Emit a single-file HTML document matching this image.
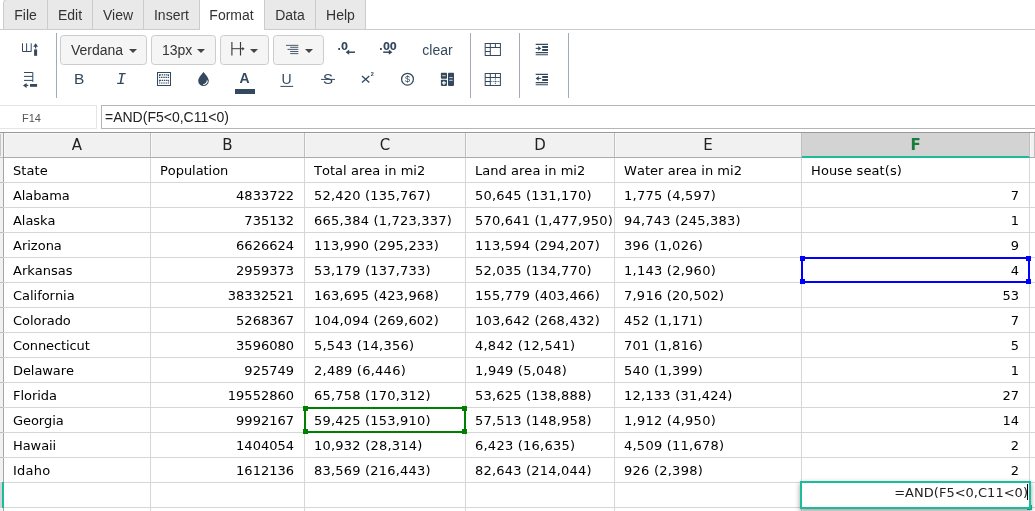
<!DOCTYPE html><html><head><meta charset="utf-8"><title>Spreadsheet</title><style>
*{box-sizing:border-box;margin:0;padding:0}
html,body{width:1035px;height:511px;overflow:hidden;background:#fff}
body{will-change:transform;position:relative;font-family:"Liberation Sans",Arial,sans-serif;color:#333}
#tabs{position:absolute;left:0;top:0;width:1035px;height:30px;border-bottom:1px solid #ccc}
.tab{position:absolute;top:-1px;height:31px;background:#e9e9e9;border:1px solid #ccc;border-left:none;font-size:14px;line-height:30px;text-align:center;color:#333}
.tab.lb{border-left:1px solid #ccc}
.tab.first{border-left:1px solid #ccc;border-top-left-radius:4px}
.tab.act{background:#fff;border-color:#fff}
.vsep{position:absolute;top:33px;height:65px;width:1px;background:#a3acb5}
.dd{position:absolute;top:35px;height:30px;border:1px solid #ccc;border-radius:3.5px;background:#f5f5f5;font-size:14px;line-height:29px;color:#333;padding-left:10px}
.caret{position:absolute;top:13px;width:0;height:0;border-left:4px solid transparent;border-right:4px solid transparent;border-top:4px solid #444}
.ico{position:absolute;color:#2c4259}
#namebox{position:absolute;left:-1px;top:105px;width:98px;height:24px;border:1px solid #e5e5e5;font-size:11px;line-height:24px;color:#555;padding-left:22px}
#fx{position:absolute;left:101px;top:105px;width:940px;height:24px;border:1px solid #b5b5b5;font-size:14px;line-height:22px;color:#222;padding-left:3px}
#grid{position:absolute;left:0;top:0;width:1035px;height:511px;font-family:"DejaVu Sans",Verdana,sans-serif;font-size:13px;color:#000}
#grid:before{content:"";position:absolute;left:0;top:132px;width:1035px;height:1px;background:#999}
.ch{position:absolute;top:133px;height:25px;background:#f1f1f1;border-right:1px solid #bfbfbf;border-bottom:1px solid #ababab;box-shadow:inset 1px 1px 0 #f8f8f8;text-align:center;line-height:24px;font-size:15px;color:#222}
.ch.sel{box-shadow:none;background:#d3d3d3;color:#1b7a3e;font-weight:bold;border-bottom:2px solid #1abc9c}
.rhc{position:absolute;left:0;top:133px;width:4px;height:380px;background:#f1f1f1;border-right:1px solid #a6a6a6}
.rhc:before{content:"";position:absolute;left:0;top:1px;width:1px;height:22px;background:#c6c6c6}
.rhl{position:absolute;left:0;width:3px;height:1px;background:#bdbdbd}
.hl{position:absolute;left:0;width:1035px;height:1px;background:#d6d6d6}
.vl{position:absolute;top:158px;width:1px;height:360px;background:#d6d6d6}
.c{position:absolute;height:24px;line-height:24px;padding:0 10px 0 9px;white-space:nowrap;overflow:hidden;font-kerning:none}
.c.r{text-align:right}
.selbox{position:absolute;border:2px solid}
.selbox i{position:absolute;width:5px;height:5px}
#editor{position:absolute;left:800px;top:481px;width:231px;height:28px;border:2px solid #1abc9c;background:#fff;box-shadow:0 2px 5px rgba(0,0,0,0.4);font-family:"DejaVu Sans",Verdana,sans-serif;font-size:13px;color:#222;line-height:19px;text-align:right;padding-right:1px;white-space:nowrap;letter-spacing:0.02px;font-kerning:none}
#cursor{position:absolute;left:225px;top:1px;width:1px;height:16px;background:#000}
#edhandle{position:absolute;left:1027px;top:505px;width:5px;height:5px;background:#1abc9c}
#rowmark{position:absolute;left:0;top:482px;width:4px;height:26px;background:#d3d3d3;border-right:2px solid #1abc9c}
#icons{position:absolute;left:0;top:0}

</style></head><body>
<div id="tabs">
<div class="tab first" style="left:3px;width:45px">File</div>
<div class="tab" style="left:48px;width:45px">Edit</div>
<div class="tab" style="left:93px;width:51px">View</div>
<div class="tab" style="left:144px;width:56px">Insert</div>
<div class="tab act" style="left:200px;width:64px">Format</div>
<div class="tab lb" style="left:264px;width:52px">Data</div>
<div class="tab" style="left:316px;width:50px">Help</div>
</div>
<div class="vsep" style="left:56px"></div>
<div class="vsep" style="left:470px"></div>
<div class="vsep" style="left:519px"></div>
<div class="vsep" style="left:568px"></div>
<div class="dd" style="left:60px;width:87px">Verdana<span class="caret" style="left:68px"></span></div>
<div class="dd" style="left:151px;width:65px">13px<span class="caret" style="left:45px"></span></div>
<div class="dd" style="left:220px;width:49px"><span class="caret" style="left:29px"></span></div>
<div class="dd" style="left:273px;width:51px"><span class="caret" style="left:31px"></span></div>
<svg id="icons" width="1035" height="100" viewBox="0 0 1035 100">
<g fill="none" stroke="#34495e" stroke-width="1">
<!-- icon: column width -->
<path d="M22.5 43.3V51.5H31.2V43.3M26.6 43.3V51.5"/>
<path d="M35.6 44V48.4" stroke-width="1.2"/>
<path d="M33.1 46.7L35.6 43.2L38.1 46.7Z" fill="#34495e" stroke="none"/>
<rect x="34.1" y="49.4" width="3" height="6.4" fill="#34495e" stroke="none"/>
<!-- icon: row height -->
<path d="M24 72.5H32.8V81.9M24 76.4H32.8M24 80.4H32.8"/>
<path d="M24 85.4H28.3" stroke-width="1.2"/>
<path d="M26.6 82.9L23 85.4L26.6 87.9Z" fill="#34495e" stroke="none"/>
<rect x="30" y="84" width="7.1" height="2.8" fill="#34495e" stroke="none"/>
<!-- border-style dropdown icon -->
<g stroke="#3a3a3a" stroke-width="1.15"><path d="M231.9 42V55.6M240.5 42V55.6"/><path d="M231.9 48.7H243" stroke-width="1"/><path d="M242.3 47L244.6 48.7L242.3 50.4Z" fill="#3a3a3a" stroke="none"/></g>
<!-- align right dropdown icon -->
<g stroke="#2c3e50" stroke-width=".85"><path d="M286 45.35H298.3M290.2 47.3H298.3M287.5 49.4H298.3M290.2 51.5H298.3M290.2 53.6H298.3"/></g>
<!-- decimal icons arrows -->
<path d="M347 52.2H355" stroke-width="1.5"/><path d="M349.2 49.6L345.6 52.2L349.2 54.8Z" fill="#34495e" stroke="none"/>
<path d="M383.2 52.2H391" stroke-width="1.5"/><path d="M388.8 49.6L392.4 52.2L388.8 54.8Z" fill="#34495e" stroke="none"/>
<!-- table icon 1 -->
<rect x="485.2" y="43.5" width="15.2" height="12"/>
<path d="M485.2 47.5H500.4M490.3 43.5V55.5M495.4 43.5V47.5M485.2 51.5H490.3"/>
<!-- table icon 2 -->
<rect x="485.2" y="73.5" width="15.2" height="12"/>
<path d="M485.2 77.5H500.4M485.2 81.5H490.3M490.3 73.5V85.5M495.4 73.5V77.5"/>
<path d="M491.3 81.5H500M495.4 78.6V85" stroke-dasharray="1 1.1" stroke-width="1.1"/>
<!-- indent icons -->
<path d="M535.7 44.4H548M535.7 52.6H548M535.7 54.7H548" stroke-width="1.1"/><path d="M542.2 47H548M542.2 50H548" stroke-width="1.9"/>
<path d="M535.7 48.4H539.5" stroke-width="1.1"/><path d="M538.2 46L541.2 48.4L538.2 50.8Z" fill="#34495e" stroke="none"/>
<path d="M535.7 74.4H548M535.7 82.6H548M535.7 84.7H548" stroke-width="1.1"/><path d="M542.2 77H548M542.2 80H548" stroke-width="1.9"/>
<path d="M537.4 78.4H541.2" stroke-width="1.1"/><path d="M538.7 76L535.7 78.4L538.7 80.8Z" fill="#34495e" stroke="none"/>
<!-- border icon -->
<rect x="157.5" y="72.5" width="13" height="13"/>
<rect x="159.5" y="74.8" width="9" height="2.6" stroke-dasharray="1.4 .8" stroke-width="1.15"/>
<rect x="159.5" y="80.4" width="9" height="2.6" stroke-dasharray="1.4 .8" stroke-width="1.15"/>
<!-- drop -->
<path d="M203.5 72C203.5 72 198.2 77.6 198.2 80.7A5.3 5.3 0 0 0 208.8 80.7C208.8 77.6 203.5 72 203.5 72Z" fill="#34495e" stroke="none"/>
<path d="M207.3 80.6A3.9 3.9 0 0 1 203.2 84.5" stroke="#fff" stroke-width="1.2"/>
<!-- font colour bar -->
<rect x="235" y="89" width="20" height="5" fill="#34495e" stroke="none"/>
<!-- underline / strike -->
<path d="M280.4 86.4H293.2M321 79.4H335"/>
<!-- superscript x -->
<path d="M362 76L369.3 82.4M369.3 76L362 82.4" stroke-width="1.35"/>
<!-- dollar circle -->
<circle cx="407.5" cy="79.2" r="5.9" stroke-width="1.25"/>
<!-- calculator icon -->
<g fill="#34495e" stroke="none"><rect x="440.9" y="72.7" width="6.1" height="6" rx=".8"/><rect x="440.9" y="79.8" width="6.1" height="6.1" rx=".8"/><rect x="448" y="72.7" width="6" height="13.2" rx=".8"/></g>
<path d="M442.2 75.7H445.7M449.3 77.6H452.7M449.3 80.3H452.7" stroke="#cfd5db" stroke-width="1"/><path d="M441.9 82.95H446M443.9 80.9V85" stroke="#fff" stroke-width="1.2"/>
</g>
<g fill="#34495e" font-family="Liberation Sans, Arial, sans-serif">
<text x="337.3" y="49.5" font-size="10" font-weight="bold" font-family="DejaVu Sans, sans-serif">.0</text>
<text x="379.1" y="49.5" font-size="10" font-weight="bold" font-family="DejaVu Sans, sans-serif">.00</text>
<text x="422.3" y="54.7" font-size="14">clear</text>
<text x="73.9" y="84.4" font-size="15.5">B</text>
<text x="116.3" y="84.4" font-size="16.5" font-style="italic" font-family="Liberation Mono, monospace">I</text>
<text x="239.6" y="83" font-size="14" font-weight="bold">A</text>
<text x="281.4" y="84.2" font-size="14">U</text>
<text x="322.9" y="84.4" font-size="15">S</text>
<text x="370.7" y="76.2" font-size="5.5" font-weight="bold">2</text>
<text x="404.9" y="82" font-size="9">$</text>
</g>
</svg>
<div id="namebox">F14</div>
<div id="fx">=AND(F5&lt;0,C11&lt;0)</div>

<div id="grid">
<div class="ch" style="left:4px;width:147px">A</div>
<div class="ch" style="left:151px;width:154px">B</div>
<div class="ch" style="left:305px;width:161px">C</div>
<div class="ch" style="left:466px;width:149px">D</div>
<div class="ch" style="left:615px;width:187px">E</div>
<div class="ch sel" style="left:802px;width:228px">F</div>
<div class="ch" style="left:1030px;width:5px"></div>
<div class="rhc"></div><div class="rhl" style="top:157px"></div>
<div class="hl" style="top:182px"></div>
<div class="rhl" style="top:182px"></div>
<div class="hl" style="top:207px"></div>
<div class="rhl" style="top:207px"></div>
<div class="hl" style="top:232px"></div>
<div class="rhl" style="top:232px"></div>
<div class="hl" style="top:257px"></div>
<div class="rhl" style="top:257px"></div>
<div class="hl" style="top:282px"></div>
<div class="rhl" style="top:282px"></div>
<div class="hl" style="top:307px"></div>
<div class="rhl" style="top:307px"></div>
<div class="hl" style="top:332px"></div>
<div class="rhl" style="top:332px"></div>
<div class="hl" style="top:357px"></div>
<div class="rhl" style="top:357px"></div>
<div class="hl" style="top:382px"></div>
<div class="rhl" style="top:382px"></div>
<div class="hl" style="top:407px"></div>
<div class="rhl" style="top:407px"></div>
<div class="hl" style="top:432px"></div>
<div class="rhl" style="top:432px"></div>
<div class="hl" style="top:457px"></div>
<div class="rhl" style="top:457px"></div>
<div class="hl" style="top:482px"></div>
<div class="rhl" style="top:482px"></div>
<div class="hl" style="top:507px"></div>
<div class="rhl" style="top:507px"></div>
<div class="hl" style="top:532px"></div>
<div class="rhl" style="top:532px"></div>
<div class="vl" style="left:150px"></div>
<div class="vl" style="left:304px"></div>
<div class="vl" style="left:465px"></div>
<div class="vl" style="left:614px"></div>
<div class="vl" style="left:801px"></div>
<div class="vl" style="left:1029px"></div>
<div class="c" style="left:4px;top:159px;width:146px;letter-spacing:0.055px">State</div>
<div class="c" style="left:151px;top:159px;width:153px;letter-spacing:-0.053px">Population</div>
<div class="c" style="left:305px;top:159px;width:160px;letter-spacing:0.04px">Total area in mi2</div>
<div class="c" style="left:466px;top:159px;width:148px;letter-spacing:0.033px">Land area in mi2</div>
<div class="c" style="left:615px;top:159px;width:186px;letter-spacing:0.039px">Water area in mi2</div>
<div class="c" style="left:802px;top:159px;width:227px;letter-spacing:0.107px">House seat(s)</div>
<div class="c" style="left:4px;top:184px;width:146px;letter-spacing:-0.098px">Alabama</div>
<div class="c r" style="left:151px;top:184px;width:153px">4833722</div>
<div class="c" style="left:305px;top:184px;width:160px;letter-spacing:0.204px">52,420 (135,767)</div>
<div class="c" style="left:466px;top:184px;width:148px;letter-spacing:0.204px">50,645 (131,170)</div>
<div class="c" style="left:615px;top:184px;width:186px;letter-spacing:0.251px">1,775 (4,597)</div>
<div class="c r" style="left:802px;top:184px;width:227px">7</div>
<div class="c" style="left:4px;top:209px;width:146px;letter-spacing:-0.034px">Alaska</div>
<div class="c r" style="left:151px;top:209px;width:153px">735132</div>
<div class="c" style="left:305px;top:209px;width:160px;letter-spacing:0.203px">665,384 (1,723,337)</div>
<div class="c" style="left:466px;top:209px;width:148px;letter-spacing:0.203px">570,641 (1,477,950)</div>
<div class="c" style="left:615px;top:209px;width:186px;letter-spacing:0.204px">94,743 (245,383)</div>
<div class="c r" style="left:802px;top:209px;width:227px">1</div>
<div class="c" style="left:4px;top:234px;width:146px">Arizona</div>
<div class="c r" style="left:151px;top:234px;width:153px">6626624</div>
<div class="c" style="left:305px;top:234px;width:160px;letter-spacing:0.192px">113,990 (295,233)</div>
<div class="c" style="left:466px;top:234px;width:148px;letter-spacing:0.192px">113,594 (294,207)</div>
<div class="c" style="left:615px;top:234px;width:186px;letter-spacing:0.243px">396 (1,026)</div>
<div class="c r" style="left:802px;top:234px;width:227px">9</div>
<div class="c" style="left:4px;top:259px;width:146px">Arkansas</div>
<div class="c r" style="left:151px;top:259px;width:153px">2959373</div>
<div class="c" style="left:305px;top:259px;width:160px;letter-spacing:0.204px">53,179 (137,733)</div>
<div class="c" style="left:466px;top:259px;width:148px;letter-spacing:0.204px">52,035 (134,770)</div>
<div class="c" style="left:615px;top:259px;width:186px;letter-spacing:0.251px">1,143 (2,960)</div>
<div class="c r" style="left:802px;top:259px;width:227px">4</div>
<div class="c" style="left:4px;top:284px;width:146px;letter-spacing:-0.034px">California</div>
<div class="c r" style="left:151px;top:284px;width:153px">38332521</div>
<div class="c" style="left:305px;top:284px;width:160px;letter-spacing:0.192px">163,695 (423,968)</div>
<div class="c" style="left:466px;top:284px;width:148px;letter-spacing:0.192px">155,779 (403,466)</div>
<div class="c" style="left:615px;top:284px;width:186px;letter-spacing:0.234px">7,916 (20,502)</div>
<div class="c r" style="left:802px;top:284px;width:227px">53</div>
<div class="c" style="left:4px;top:309px;width:146px;letter-spacing:-0.044px">Colorado</div>
<div class="c r" style="left:151px;top:309px;width:153px">5268367</div>
<div class="c" style="left:305px;top:309px;width:160px;letter-spacing:0.192px">104,094 (269,602)</div>
<div class="c" style="left:466px;top:309px;width:148px;letter-spacing:0.192px">103,642 (268,432)</div>
<div class="c" style="left:615px;top:309px;width:186px;letter-spacing:0.243px">452 (1,171)</div>
<div class="c r" style="left:802px;top:309px;width:227px">7</div>
<div class="c" style="left:4px;top:334px;width:146px;letter-spacing:-0.101px">Connecticut</div>
<div class="c r" style="left:151px;top:334px;width:153px">3596080</div>
<div class="c" style="left:305px;top:334px;width:160px;letter-spacing:0.234px">5,543 (14,356)</div>
<div class="c" style="left:466px;top:334px;width:148px;letter-spacing:0.234px">4,842 (12,541)</div>
<div class="c" style="left:615px;top:334px;width:186px;letter-spacing:0.243px">701 (1,816)</div>
<div class="c r" style="left:802px;top:334px;width:227px">5</div>
<div class="c" style="left:4px;top:359px;width:146px;letter-spacing:-0.08px">Delaware</div>
<div class="c r" style="left:151px;top:359px;width:153px">925749</div>
<div class="c" style="left:305px;top:359px;width:160px;letter-spacing:0.251px">2,489 (6,446)</div>
<div class="c" style="left:466px;top:359px;width:148px;letter-spacing:0.251px">1,949 (5,048)</div>
<div class="c" style="left:615px;top:359px;width:186px;letter-spacing:0.243px">540 (1,399)</div>
<div class="c r" style="left:802px;top:359px;width:227px">1</div>
<div class="c" style="left:4px;top:384px;width:146px;letter-spacing:-0.038px">Florida</div>
<div class="c r" style="left:151px;top:384px;width:153px">19552860</div>
<div class="c" style="left:305px;top:384px;width:160px;letter-spacing:0.204px">65,758 (170,312)</div>
<div class="c" style="left:466px;top:384px;width:148px;letter-spacing:0.204px">53,625 (138,888)</div>
<div class="c" style="left:615px;top:384px;width:186px;letter-spacing:0.217px">12,133 (31,424)</div>
<div class="c r" style="left:802px;top:384px;width:227px">27</div>
<div class="c" style="left:4px;top:409px;width:146px;letter-spacing:-0.066px">Georgia</div>
<div class="c r" style="left:151px;top:409px;width:153px">9992167</div>
<div class="c" style="left:305px;top:409px;width:160px;letter-spacing:0.204px">59,425 (153,910)</div>
<div class="c" style="left:466px;top:409px;width:148px;letter-spacing:0.204px">57,513 (148,958)</div>
<div class="c" style="left:615px;top:409px;width:186px;letter-spacing:0.251px">1,912 (4,950)</div>
<div class="c r" style="left:802px;top:409px;width:227px">14</div>
<div class="c" style="left:4px;top:434px;width:146px;letter-spacing:-0.072px">Hawaii</div>
<div class="c r" style="left:151px;top:434px;width:153px">1404054</div>
<div class="c" style="left:305px;top:434px;width:160px;letter-spacing:0.217px">10,932 (28,314)</div>
<div class="c" style="left:466px;top:434px;width:148px;letter-spacing:0.234px">6,423 (16,635)</div>
<div class="c" style="left:615px;top:434px;width:186px;letter-spacing:0.234px">4,509 (11,678)</div>
<div class="c r" style="left:802px;top:434px;width:227px">2</div>
<div class="c" style="left:4px;top:459px;width:146px;letter-spacing:0.251px">Idaho</div>
<div class="c r" style="left:151px;top:459px;width:153px">1612136</div>
<div class="c" style="left:305px;top:459px;width:160px;letter-spacing:0.204px">83,569 (216,443)</div>
<div class="c" style="left:466px;top:459px;width:148px;letter-spacing:0.204px">82,643 (214,044)</div>
<div class="c" style="left:615px;top:459px;width:186px;letter-spacing:0.243px">926 (2,398)</div>
<div class="c r" style="left:802px;top:459px;width:227px">2</div>
</div>
<div class="selbox" style="left:801px;top:257px;width:229px;height:26px;border-color:#0000ff">
<i style="left:-3px;top:-3px;background:#0000ff"></i><i style="right:-3px;top:-3px;background:#0000ff"></i><i style="left:-3px;bottom:-3px;background:#0000ff"></i><i style="right:-3px;bottom:-3px;background:#0000ff"></i></div>
<div class="selbox" style="left:304px;top:407px;width:162px;height:26px;border-color:#008000">
<i style="left:-3px;top:-3px;background:#008000"></i><i style="right:-3px;top:-3px;background:#008000"></i><i style="left:-3px;bottom:-3px;background:#008000"></i><i style="right:-3px;bottom:-3px;background:#008000"></i></div>
<div id="edhandle"></div>
<div id="editor">=AND(F5&lt;0,C11&lt;0)<span id="cursor"></span></div>
<div id="rowmark"></div>

</body></html>
